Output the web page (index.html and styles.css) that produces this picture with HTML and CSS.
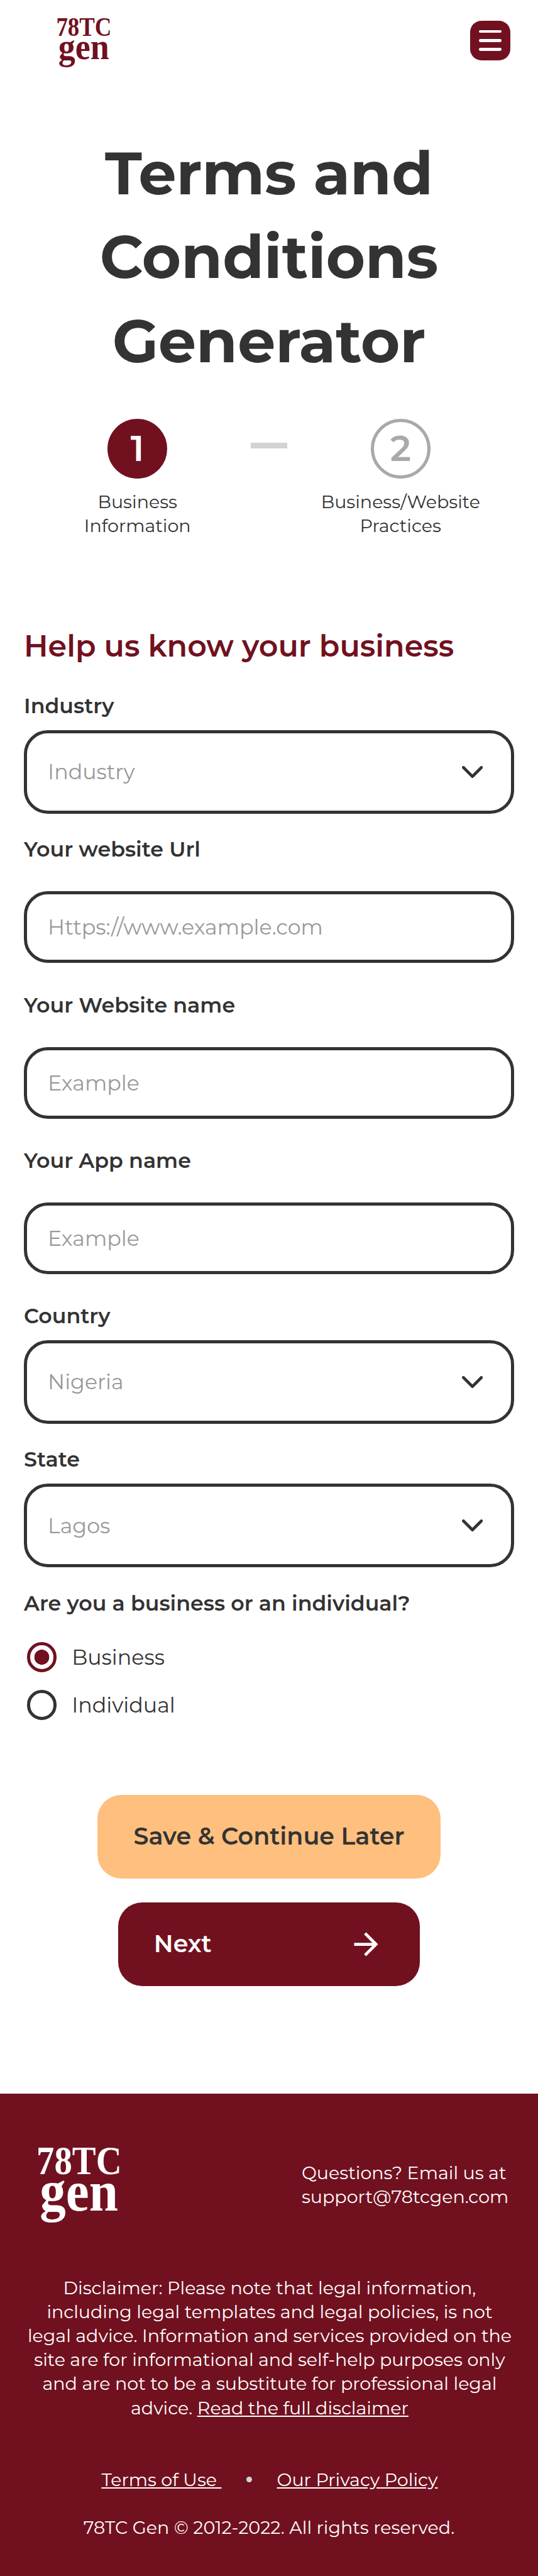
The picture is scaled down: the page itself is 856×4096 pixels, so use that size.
FILE: index.html
```html
<!DOCTYPE html>
<html lang="en">
<head>
<meta charset="utf-8">
<title>Terms and Conditions Generator</title>
<link rel="stylesheet" href="styles.css">
</head>
<body>
<header class="header">
  <svg class="logo logo-header" viewBox="0 0 56 50" role="img" aria-label="78TC gen">
    <text class="logo-text" x="-0.4" y="17.8" font-size="26.6" textLength="57" lengthAdjust="spacingAndGlyphs">78TC</text>
    <text class="logo-text" x="1.8" y="42.1" font-size="38" textLength="52.4" lengthAdjust="spacingAndGlyphs">gen</text>
  </svg>
  <button class="menu" aria-label="Menu"><span></span><span></span><span></span></button>
</header>
<main>
  <h1 class="title">Terms and<br>Conditions<br>Generator</h1>
  <div class="steps">
    <div class="step"><div class="circle active">1</div><div class="step-label">Business<br>Information</div></div>
    <div class="dash"></div>
    <div class="step"><div class="circle">2</div><div class="step-label">Business/Website<br>Practices</div></div>
  </div>
  <form class="form">
    <h2 class="heading">Help us know your business</h2>
    <div class="field select">
      <div class="label">Industry</div>
      <div class="box"><span>Industry</span><svg class="chevron" viewBox="0 0 14 8"><path d="M1 1l6 6 6-6"/></svg></div>
    </div>
    <div class="field">
      <div class="label">Your website Url</div>
      <div class="box"><span>Https://www.example.com</span></div>
    </div>
    <div class="field">
      <div class="label">Your Website name</div>
      <div class="box"><span>Example</span></div>
    </div>
    <div class="field">
      <div class="label">Your App name</div>
      <div class="box"><span>Example</span></div>
    </div>
    <div class="field select">
      <div class="label">Country</div>
      <div class="box"><span>Nigeria</span><svg class="chevron" viewBox="0 0 14 8"><path d="M1 1l6 6 6-6"/></svg></div>
    </div>
    <div class="field select">
      <div class="label">State</div>
      <div class="box"><span>Lagos</span><svg class="chevron" viewBox="0 0 14 8"><path d="M1 1l6 6 6-6"/></svg></div>
    </div>
    <div class="label">Are you a business or an individual?</div>
    <div class="radios">
      <div class="radio checked"><i></i><span>Business</span></div>
      <div class="radio"><i></i><span>Individual</span></div>
    </div>
    <div class="actions">
      <div class="btn save">Save &amp; Continue Later</div>
      <div class="btn next"><span>Next</span><svg class="arrow" viewBox="0 0 24 24"><path d="M12 4l-1.41 1.41L16.17 11H4v2h12.17l-5.58 5.59L12 20l8-8z"/></svg></div>
    </div>
  </form>
</main>
<footer class="footer">
  <div class="footer-top">
    <svg class="logo logo-footer" viewBox="0 0 56 50" role="img" aria-label="78TC gen">
      <text class="logo-text" x="-0.4" y="17.8" font-size="26.6" textLength="57" lengthAdjust="spacingAndGlyphs">78TC</text>
      <text class="logo-text" x="1.8" y="42.1" font-size="38" textLength="52.4" lengthAdjust="spacingAndGlyphs">gen</text>
    </svg>
    <p class="contact">Questions? Email us at<br>support@78tcgen.com</p>
  </div>
  <p class="disclaimer">Disclaimer: Please note that legal information,<br>including legal templates and legal policies, is not<br>legal advice. Information and services provided on the<br>site are for informational and self-help purposes only<br>and are not to be a substitute for professional legal<br>advice. <a>Read the full disclaimer</a></p>
  <div class="links"><a>Terms of Use&nbsp;</a><i class="dot"></i><a>Our Privacy Policy</a></div>
  <p class="copyright">78TC Gen © 2012-2022. All rights reserved.</p>
</footer>
</body>
</html>
```
FILE: styles.css
```css
/* 1rem is one unit of the 360-unit wide mobile grid */
html { font-size: 2.3782px; }
* { box-sizing: border-box; }
body {
  margin: 0;
  width: 856px;
  height: 4096px;
  display: flex;
  flex-direction: column;
  overflow: hidden;
  background: #fff;
  color: #333;
  font-family: Montserrat, Inter, "Open Sans", sans-serif;
  font-size: 12rem;
  line-height: 16rem;
}
p, h1, h2 { margin: 0; }
.header {
  height: 88rem;
  padding: 12rem 18.6rem 0 37.8rem;
  display: flex;
  justify-content: space-between;
  align-items: flex-start;
}
.logo { display: block; overflow: visible; }
.logo-text { font-family: "Liberation Serif", serif; font-weight: 700; fill: currentColor; }
.logo-header { width: 36.4rem; height: 32.5rem; color: #711120; }
.logo-footer { width: 56rem; height: 50rem; color: #fff; }
.menu {
  width: 26.7rem;
  height: 26.7rem;
  margin-top: 1.7rem;
  padding: 0;
  border: 0;
  border-radius: 7.6rem;
  background: #711120;
  display: flex;
  flex-direction: column;
  align-items: center;
  justify-content: center;
  gap: 4rem;
}
.menu span { width: 15.4rem; height: 2rem; border-radius: 1rem; background: #fff; }
.title {
  height: 192rem;
  text-align: center;
  font-size: 40rem;
  line-height: 56rem;
  font-weight: 700;
}
.steps { display: grid; grid-template-columns: 120rem 56rem 120rem; justify-content: center; height: 130rem; }
.step { display: flex; flex-direction: column; align-items: center; }
.circle {
  width: 40rem;
  height: 40rem;
  border: 5px solid #a9a9a9;
  border-radius: 50%;
  color: #a9a9a9;
  font-size: 24rem;
  font-weight: 600;
  display: flex;
  align-items: center;
  justify-content: center;
}
.circle.active { background: #711120; border-color: #711120; color: #fff; }
.step-label { margin-top: 7.6rem; text-align: center; white-space: nowrap; }
.dash { width: 24rem; height: 4rem; margin: 16rem auto 0; background: #d3d3d3; }
.form { padding: 0 16rem; }
.heading {
  height: 50rem;
  padding-top: 8rem;
  font-size: 20rem;
  line-height: 28rem;
  font-weight: 600;
  color: #711120;
}
.field { margin-bottom: 16rem; }
.field.select { margin-bottom: 12rem; }
.label { height: 24rem; line-height: 24rem; font-size: 14rem; font-weight: 600; white-space: nowrap; }
.box {
  height: 48rem;
  margin-top: 16rem;
  padding: 0 18.9rem 0 13.9rem;
  border: 5px solid #333;
  border-radius: 16rem;
  display: flex;
  align-items: center;
  justify-content: space-between;
  font-size: 14rem;
  font-weight: 400;
  color: #999;
}
.select .box { height: 56rem; margin-top: 4rem; }
.chevron { width: 14rem; height: 8rem; fill: none; stroke: #333; stroke-width: 2; stroke-linecap: round; stroke-linejoin: miter; }
.radios { margin-top: 14rem; padding-left: 2rem; display: flex; flex-direction: column; gap: 12rem; }
.radio { height: 20rem; display: flex; align-items: center; gap: 10rem; font-size: 14rem; }
.radio i { width: 20rem; height: 20rem; border: 5px solid #333; border-radius: 50%; }
.radio.checked i { border-color: #711120; background: radial-gradient(circle, #711120 0 4.9rem, #fff 5.1rem); }
.actions { margin-top: 50rem; display: flex; flex-direction: column; align-items: center; gap: 16rem; }
.btn {
  height: 56rem;
  border-radius: 16rem;
  display: flex;
  align-items: center;
  font-size: 16rem;
  font-weight: 600;
  white-space: nowrap;
}
.save { width: 230rem; justify-content: center; background: #ffbf7f; }
.next { width: 202rem; padding: 0 24rem; justify-content: space-between; background: #711120; color: #fff; }
.arrow { width: 24rem; height: 24rem; fill: #fff; }
.footer { margin-top: 72rem; flex: 1; background: #711120; color: #fff; white-space: nowrap; }
.footer-top { height: 122rem; padding: 36.3rem 0 0 25rem; display: flex; }
.contact { margin: 8.5rem 0 0 120.8rem; }
.disclaimer { text-align: center; padding-left: 0.8rem; }
.footer a { text-decoration: underline; }
.links { margin-top: 32rem; padding-left: 0.8rem; display: flex; justify-content: center; align-items: center; }
.dot { width: 4rem; height: 4rem; margin: 0 16.5rem; border-radius: 50%; background: #d3d3d3; }
.copyright { margin-top: 16rem; text-align: center; }
```
